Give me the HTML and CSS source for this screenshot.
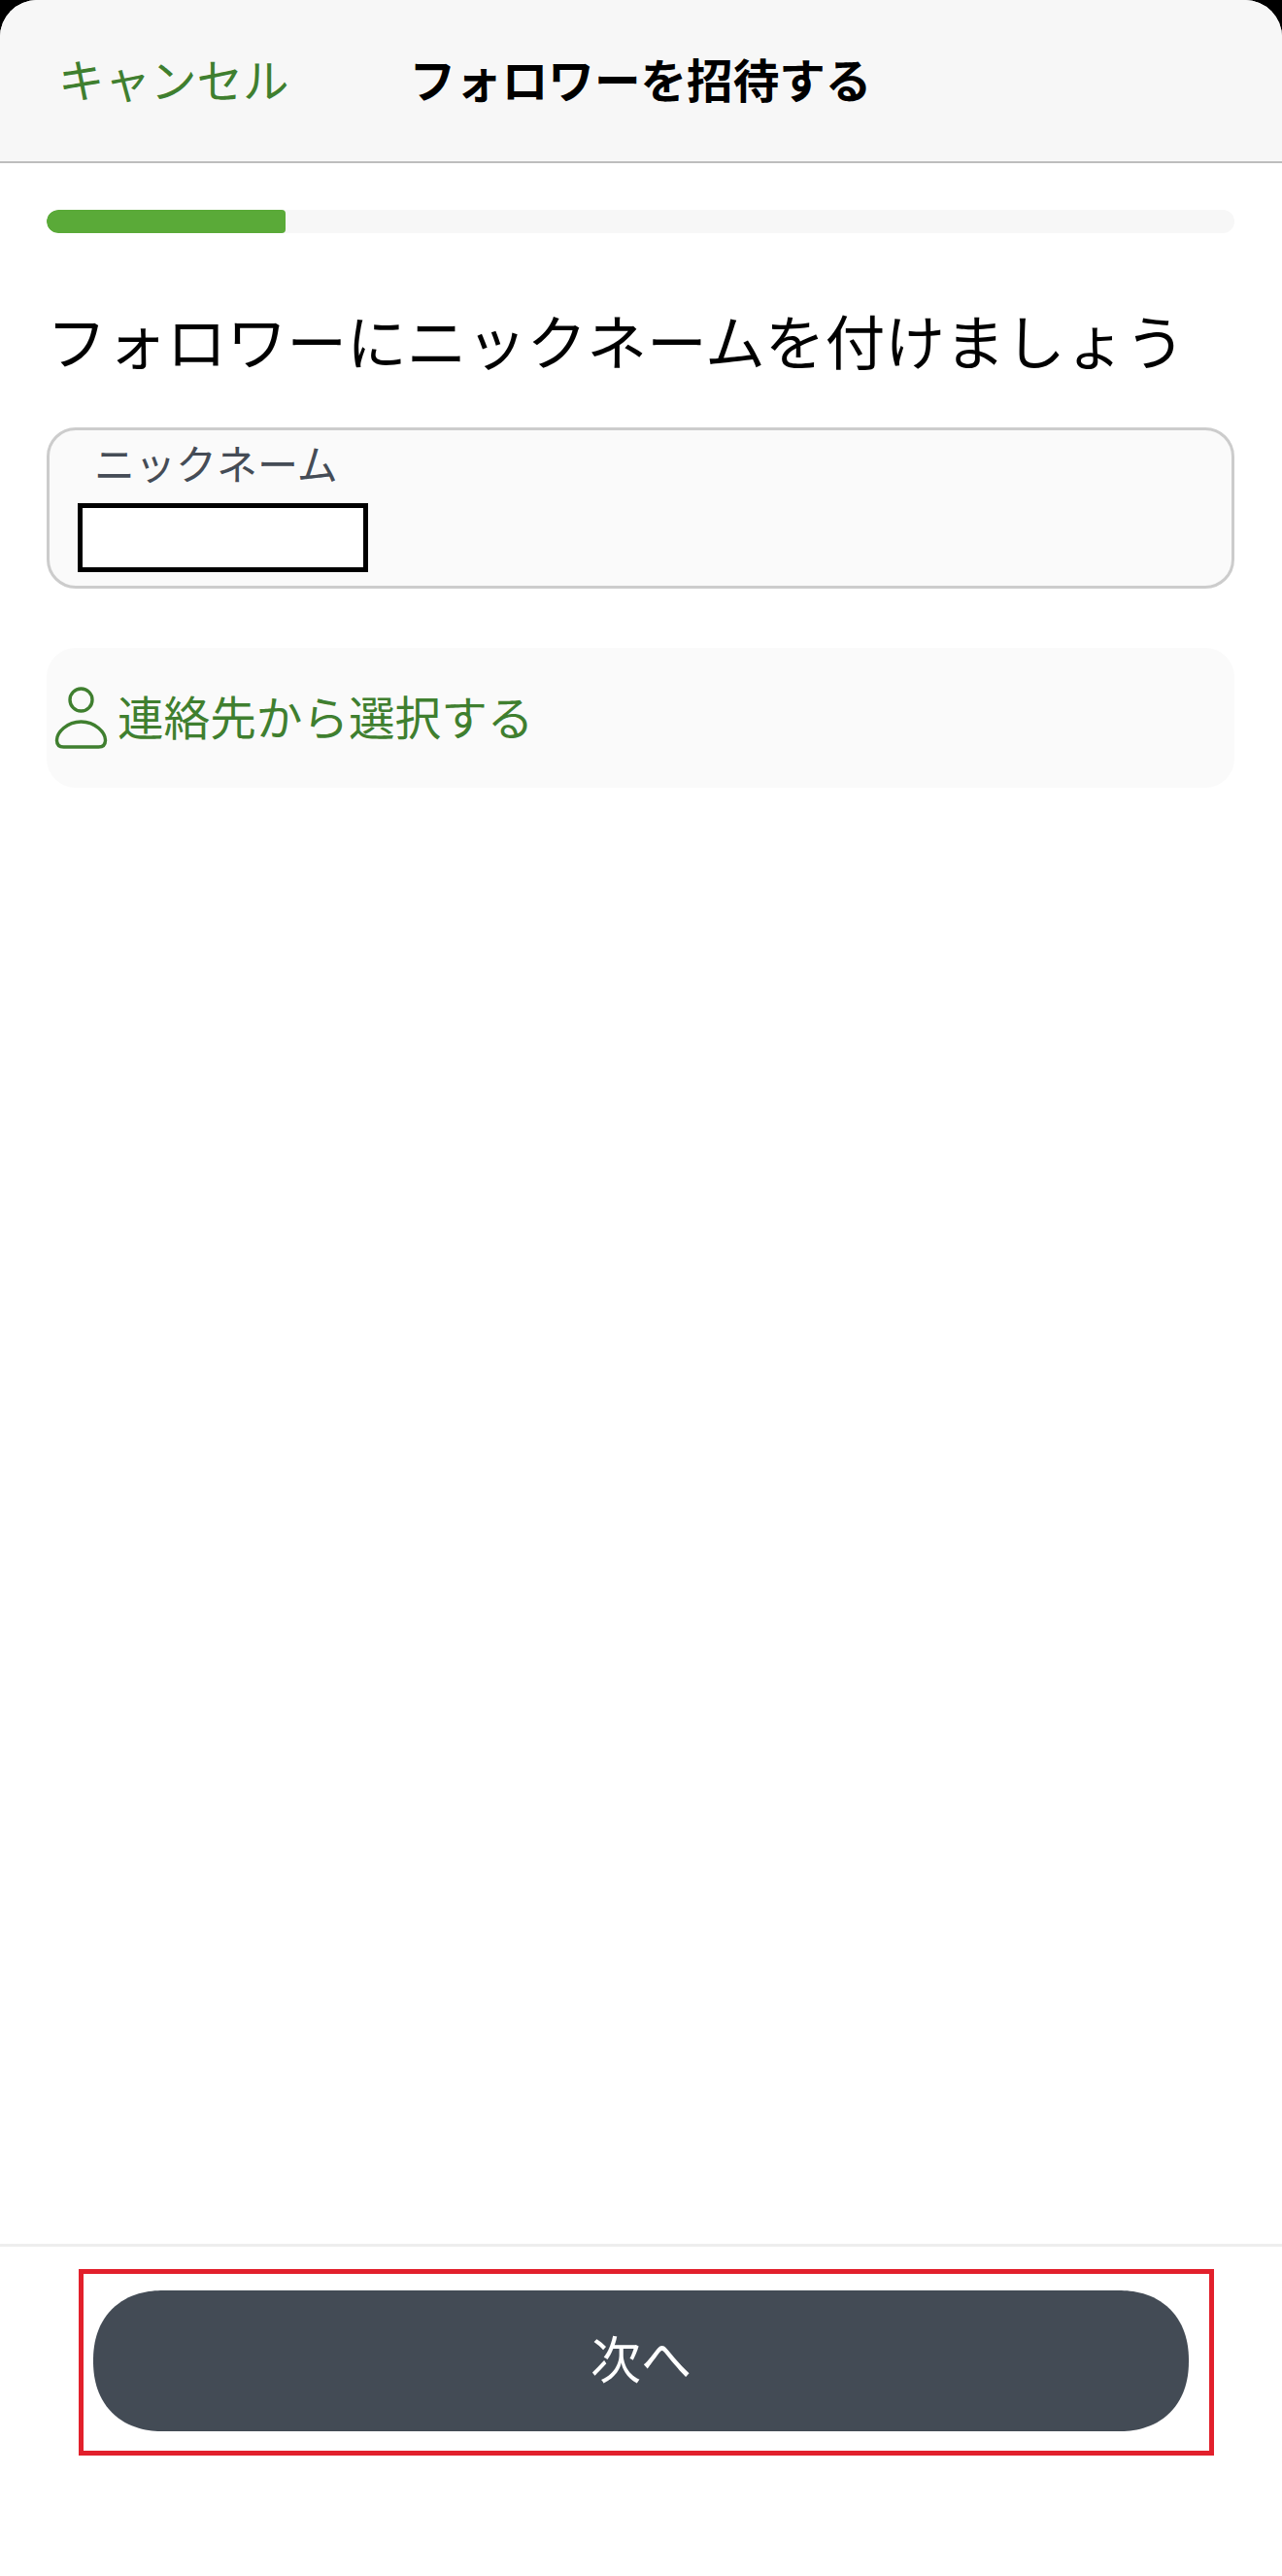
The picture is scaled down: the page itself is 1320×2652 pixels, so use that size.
FILE: index.html
```html
<!DOCTYPE html>
<html lang="ja">
<head>
    <meta charset="UTF-8">
    <meta name="viewport" content="width=device-width, initial-scale=1.0">
    <title>フォロワーを招待する</title>
    <link rel="stylesheet" href="styles.css">
</head>
<body>
    <div class="sheet">
        <header class="top-bar">
            <a class="cancel-link">キャンセル</a>
            <h1 class="top-title">フォロワーを招待する</h1>
        </header>

        <main class="content">
            <div class="progress">
                <div class="progress-fill"></div>
            </div>

            <h2 class="question">フォロワーにニックネームを付けましょう</h2>

            <div class="nickname-field">
                <label class="nickname-label">ニックネーム</label>
                <div class="masked-value"></div>
            </div>

            <a class="contact-row">
                <svg class="contact-icon" viewBox="0 0 56 64" fill="none" stroke="currentColor" stroke-width="3.4">
                    <circle cx="27.5" cy="13.5" r="11.5"/>
                    <path d="M27.5 36C13 36 2.5 47 2.5 55C2.5 60 5.5 62 9.5 62H45.5C49.5 62 52.5 60 52.5 55C52.5 47 42 36 27.5 36Z"/>
                </svg>
                <span class="contact-text">連絡先から選択する</span>
            </a>
        </main>

        <footer class="bottom-bar">
            <div class="highlight-box">
                <button class="next-button" type="button">次へ</button>
            </div>
        </footer>
    </div>
</body>
</html>
```

FILE: styles.css
```css
* {
    box-sizing: border-box;
}

body {
    margin: 0;
    background: #000;
    font-family: "Noto Sans CJK JP", "Noto Sans", sans-serif;
}

.sheet {
    display: flex;
    flex-direction: column;
    width: 1320px;
    height: 2652px;
    background: #fff;
    border-radius: 38px 38px 0 0;
    overflow: hidden;
}

.top-bar {
    display: flex;
    align-items: center;
    height: 168px;
    padding: 0 0 5px 60px;
    background: #f7f7f7;
    border-bottom: 2px solid #bdbdbd;
}

.cancel-link {
    font-size: 47.5px;
    color: #3f7f2f;
}

.top-title {
    margin: 0 0 0 124px;
    font-size: 47.6px;
    font-weight: 700;
    color: #000;
}

.content {
    flex: 1;
    padding: 48px 49px 0 48px;
}

.progress {
    height: 24px;
    background: #f7f7f7;
    border-radius: 12px;
    overflow: hidden;
}

.progress-fill {
    width: 246px;
    height: 100%;
    background: #5aaa38;
    border-radius: 12px 4px 4px 12px;
}

.question {
    margin: 65px 0 0;
    font-size: 61.8px;
    font-weight: 400;
    line-height: 88px;
    color: #000;
    white-space: nowrap;
}

.nickname-field {
    height: 166px;
    margin-top: 47px;
    padding: 8px 0 0 29px;
    background: #fafafa;
    border: 3px solid #cccccc;
    border-radius: 30px;
}

.nickname-label {
    display: block;
    margin-left: 17px;
    font-size: 42px;
    line-height: 50px;
    color: #454c56;
}

.masked-value {
    width: 299px;
    height: 71px;
    margin-top: 17px;
    background: #fff;
    border: 5px solid #000;
}

.contact-row {
    display: flex;
    align-items: center;
    gap: 9px;
    height: 144px;
    margin-top: 61px;
    padding-left: 8px;
    background: #fafafa;
    border-radius: 30px;
    font-size: 47.6px;
    color: #3f7f2f;
}

.contact-icon {
    width: 56px;
    height: 64px;
}

.contact-text {
    margin-bottom: 6px;
}

.bottom-bar {
    height: 342px;
    padding: 23px 70px 0 81px;
    border-top: 3px solid #eeeeee;
}

.highlight-box {
    height: 192px;
    padding: 17px 21px 20px 10px;
    background: #fff;
    border: 5px solid #e2202c;
}

.next-button {
    display: block;
    width: 100%;
    height: 145px;
    padding: 0 0 8px;
    background: #434b55;
    border: 0;
    border-radius: 72px;
    corner-shape: superellipse(1.15);
    font-family: inherit;
    font-size: 52px;
    color: #fff;
}
```
